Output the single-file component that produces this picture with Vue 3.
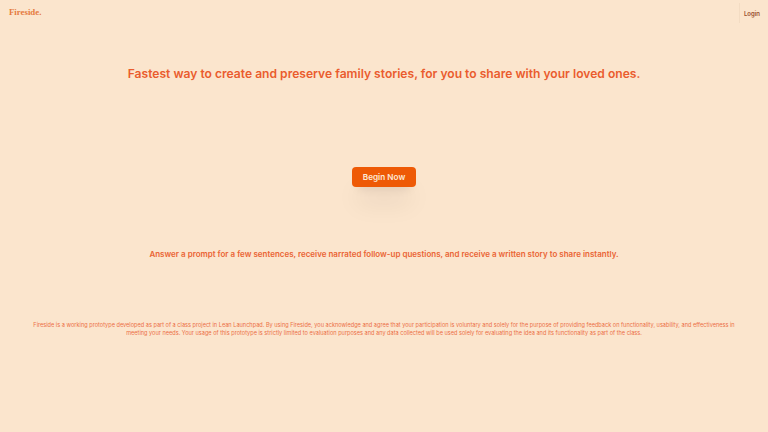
<script setup>
const disclaimer = 'Fireside is a working prototype developed as part of a class project in Lean Launchpad. By using Fireside, you acknowledge and agree that your participation is voluntary and solely for the purpose of providing feedback on functionality, usability, and effectiveness in meeting your needs. Your usage of this prototype is strictly limited to evaluation purposes and any data collected will be used solely for evaluating the idea and its functionality as part of the class.'
</script>

<template>
  <div class="page">
    <header class="topbar">
      <div class="logo">Fireside.</div>
      <button class="login">Login</button>
    </header>

    <main class="content">
      <h1>Fastest way to create and preserve family stories, for you to share with your loved ones.</h1>
      <button class="begin">Begin Now</button>
      <h2>Answer a prompt for a few sentences, receive narrated follow-up questions, and receive a written story to share instantly.</h2>
      <p>{{ disclaimer }}</p>
    </main>
  </div>
</template>

<style scoped>
.page {
  height: 432px;
  overflow: hidden;
  background: #fbe5cd;
  font-family: Inter, "Liberation Sans", sans-serif;
}

.topbar {
  height: 24px;
  display: flex;
  justify-content: space-between;
  align-items: center;
}

.logo {
  padding-left: 9px;
  font-family: "Liberation Serif", serif;
  font-size: 8.8px;
  font-weight: bold;
  color: #e57a3e;
}

.login {
  height: 20px;
  margin-top: 2px;
  padding: 0 8px 0 4px;
  border: none;
  border-left: 1px solid #f3dcc3;
  background: none;
  font-family: inherit;
  font-size: 6px;
  font-weight: 600;
  color: #9a4f2f;
}

.content {
  display: flex;
  flex-direction: column;
  align-items: center;
  text-align: center;
}

h1 {
  margin: 42px 0 0;
  font-size: 12.1px;
  line-height: 16px;
  font-weight: 600;
  color: #ea5c2e;
}

.begin {
  width: 64px;
  height: 20px;
  margin-top: 85px;
  padding: 0;
  border: none;
  border-radius: 4px;
  background: #ee5a06;
  box-shadow: 0 20px 25px -5px rgba(0, 0, 0, 0.1), 0 8px 10px -6px rgba(0, 0, 0, 0.1);
  font-family: inherit;
  font-size: 8.2px;
  font-weight: 600;
  color: #fde9d6;
}

h2 {
  margin: 61px 0 0;
  font-size: 8px;
  line-height: 12px;
  font-weight: 600;
  color: #ea6434;
}

p {
  margin: 61px 0 0;
  padding: 0 32px;
  font-size: 5.6px;
  line-height: 8px;
  color: #ec6f45;
}
</style>

<style>
body {
  margin: 0;
  background: #fbe5cd;
}
</style>
